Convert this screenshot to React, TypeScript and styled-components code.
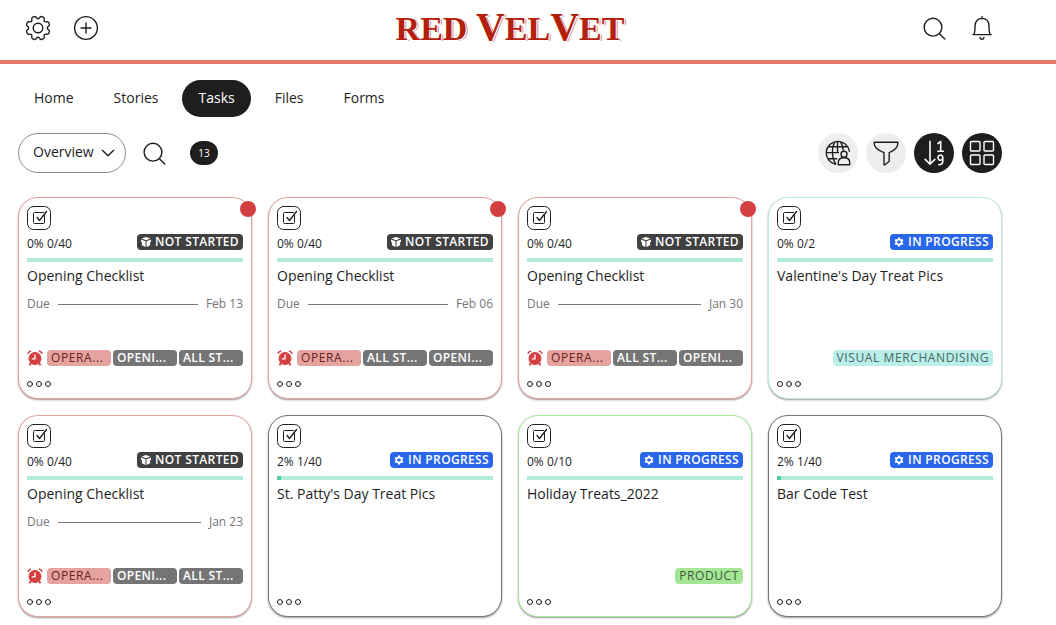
import React from "react";
import styled, { createGlobalStyle } from "styled-components";

const ink = "#1e1e1e";

const GlobalStyle = createGlobalStyle`
  *, *::before, *::after { box-sizing: border-box; }
  body {
    margin: 0;
    background: #fff;
    color: ${ink};
    font: 14px/20px "Open Sans", "Noto Sans", sans-serif;
  }
  button, select { font: inherit; color: inherit; }
  button { cursor: pointer; }
`;

const Header = styled.header`
  display: grid;
  grid-template-columns: 1fr auto 1fr;
  align-items: center;
  height: 64px;
  padding: 0 60px 0 24px;
  border-bottom: 4px solid #eb766d;
`;

const HeaderGroup = styled.div<{ $end?: boolean }>`
  display: flex;
  gap: 20px;
  padding-bottom: 4px;
  justify-content: ${(p) => (p.$end ? "flex-end" : "flex-start")};
`;

const IconButton = styled.button`
  display: flex;
  align-items: center;
  justify-content: center;
  width: 28px;
  height: 28px;
  padding: 0;
  border: 0;
  background: none;
`;

const Logo = styled.a`
  display: flex;
  align-items: baseline;
  padding-bottom: 4px;
  color: #b3200e;
  font: bold 34px/40px "Liberation Serif", serif;
  text-decoration: none;
  white-space: pre;
  text-shadow: 1px 1px 0 #fff, 2px 1px 0 #d98b80;
`;

const LogoTall = styled.span`
  font-size: 40px;
`;

const Nav = styled.nav`
  display: flex;
  gap: 8px;
  padding: 16px 18px;
`;

const NavLink = styled.a<{ $active?: boolean }>`
  padding: 8px 16px 9px;
  border-radius: 20px;
  color: ${(p) => (p.$active ? "#fff" : ink)};
  background: ${(p) => (p.$active ? ink : "transparent")};
  text-decoration: none;
`;

const Toolbar = styled.div`
  display: flex;
  align-items: center;
  justify-content: space-between;
  padding: 0 54px 24px 18px;
`;

const ToolGroup = styled.div`
  display: flex;
  align-items: center;
  gap: 8px;
`;

const Filters = styled(ToolGroup)`
  gap: 14px;
`;

const SelectWrap = styled.label`
  display: grid;
  align-items: center;
  > * { grid-area: 1 / 1; }
  > svg { justify-self: end; margin-right: 11px; pointer-events: none; }
`;

const ViewSelect = styled.select`
  appearance: none;
  width: 108px;
  height: 40px;
  padding: 0 28px 2px 14px;
  border: 1px solid #8c8c8c;
  border-radius: 20px;
  background: #fff;
`;

const Count = styled.span`
  display: flex;
  align-items: center;
  justify-content: center;
  width: 28px;
  height: 24px;
  margin-left: 8px;
  border-radius: 12px;
  background: ${ink};
  color: #fff;
  font-size: 10px;
`;

const RoundButton = styled.button<{ $dark?: boolean }>`
  display: flex;
  align-items: center;
  justify-content: center;
  width: 40px;
  height: 40px;
  padding: 0;
  border: 0;
  border-radius: 50%;
  background: ${(p) => (p.$dark ? ink : "#eee")};
  color: ${(p) => (p.$dark ? "#fff" : ink)};
`;

const Board = styled.main`
  display: grid;
  grid-template-columns: repeat(auto-fill, 234px);
  gap: 16px;
  padding: 0 18px 8px;
`;

const CardBox = styled.article<{ $edge: string }>`
  position: relative;
  display: flex;
  flex-direction: column;
  min-height: 202px;
  padding: 8px;
  border: 1px solid ${(p) => p.$edge};
  border-radius: 20px;
  background: #fff;
  box-shadow: 0 1px 2px rgba(0, 0, 0, 0.4);
`;

const AlertDot = styled.span`
  position: absolute;
  top: 3px;
  right: -5px;
  width: 16px;
  height: 16px;
  border-radius: 50%;
  background: #d43f41;
`;

const StatusRow = styled.div`
  display: flex;
  justify-content: space-between;
  align-items: center;
  height: 16px;
  margin: 4px 0 8px;
  font-size: 12px;
`;

const ProgressText = styled.span`
  padding-top: 3px;
`;

const Chip = styled.span<{ $bg: string; $fg?: string; $fixed?: boolean }>`
  display: flex;
  align-items: center;
  gap: 4px;
  height: 16px;
  width: ${(p) => (p.$fixed ? "64px" : "auto")};
  padding: 0 4px 1px;
  border-radius: 4px;
  background: ${(p) => p.$bg};
  color: ${(p) => p.$fg || "#fff"};
  font-size: 12px;
  font-weight: ${(p) => (p.$fg ? 500 : 600)};
  line-height: 14px;
  letter-spacing: ${(p) => (p.$fg ? "0.05em" : "0.03em")};
  text-transform: uppercase;
  white-space: nowrap;
`;

const Track = styled.div`
  height: 4px;
  background: #b2ebd9;
`;

const Fill = styled.div`
  height: 4px;
  background: #52cfa0;
`;

const Title = styled.h2`
  margin: 4px 0 8px;
  font-size: 14px;
  line-height: 20px;
  font-weight: 400;
`;

const DueRow = styled.div`
  display: flex;
  align-items: center;
  gap: 8px;
  color: #767676;
  font-size: 12px;
  line-height: 20px;
`;

const DueLine = styled.span`
  flex: 1;
  height: 1px;
  background: #767676;
`;

const CardFoot = styled.footer`
  margin-top: auto;
`;

const Tags = styled.div`
  display: flex;
  align-items: center;
  justify-content: flex-end;
  gap: 2px;
`;

const AlarmSlot = styled.span`
  display: flex;
  margin-right: auto;
`;

const MoreButton = styled.button`
  display: block;
  height: 8px;
  margin: 14px 0 2px;
  padding: 0;
  border: 0;
  background: none;
  > svg { display: block; }
`;

const stroke = {
  fill: "none",
  stroke: "currentColor",
  strokeWidth: 1.4,
  strokeLinecap: "round" as const,
  strokeLinejoin: "round" as const,
  "aria-hidden": true,
};

const gearPath = (() => {
  const teeth = 8;
  const pts: string[] = [];
  for (let i = 0; i < teeth; i++) {
    const a = (i * 2 * Math.PI) / teeth + Math.PI / 8;
    const at = (r: number, d: number) =>
      `${(12 + r * Math.cos(a + d)).toFixed(2)} ${(12 + r * Math.sin(a + d)).toFixed(2)}`;
    pts.push(
      `${i ? "L" : "M"}${at(11.2, -0.2)}Q${at(12.1, -0.14)} ${at(12, -0.06)}L${at(12, 0.06)}Q${at(12.1, 0.14)} ${at(11.2, 0.2)}Q${at(7.6, 0.39)} ${at(11.2, 0.585)}`
    );
  }
  return pts.join("") + "Z";
})();

const GearIcon = () => (
  <svg width="26" height="26" viewBox="-1 -1 26 26" {...stroke}>
    <path d={gearPath} />
    <circle cx="12" cy="12" r="4.8" />
  </svg>
);
const PlusIcon = () => (
  <svg width="26" height="26" viewBox="0 0 26 26" {...stroke}>
    <circle cx="13" cy="13" r="11.4" />
    <path d="M13 8v10M8 13h10" />
  </svg>
);
const SearchIcon = () => (
  <svg width="24" height="24" viewBox="0 0 24 24" {...stroke}>
    <circle cx="11" cy="11.2" r="8.9" />
    <path d="M17.4 17.8l5.400 5.200" />
  </svg>
);
const BellIcon = () => (
  <svg width="24" height="26" viewBox="0 0 24 26" {...stroke}>
    <path d="M12 1.5v2M2.800 19.600h18.400M4 19.400c1-2 1-4 1-8.100c0-5 2.800-7.900 7-7.900s7 2.900 7 7.900c0 4.100 0 6.100 1 8.100M10 22.500c.6 2.300 3.400 2.300 4 0" />
  </svg>
);
const GlobeUserIcon = () => (
  <svg width="26" height="26" viewBox="0 0 26 26" {...stroke}>
    <path d="M10.500 24.300A11.600 11.600 0 1 1 24.300 11.200M12.500 1.400v11.200M10 1.800C6.500 7 6.500 18 10.700 24M15.500 1.800c1.800 2.800 2.500 5.500 2.600 8.200M3.200 6.700h19M1.200 12.600h12.300M3.200 18.700h8.500" />
    <circle cx="19" cy="14.300" r="3" />
    <path d="M13.300 24.700v-2.200c0-3 2.300-4.700 5.700-4.700s5.700 1.700 5.700 4.700v2.200z" />
  </svg>
);
const FunnelIcon = () => (
  <svg width="26" height="26" viewBox="0 0 26 26" {...stroke}>
    <path d="M1.200 2.200h23.600v1.500c0 4.500-4 7-8.600 9v8.500l-4.200 3.500h-1v-12C6 10.500 1.200 8 1.200 3.700z" />
  </svg>
);
const SortIcon = () => (
  <svg width="26" height="26" viewBox="0 0 26 26" {...stroke} strokeWidth={1.600}>
    <path d="M9 1.300v22.700M4.200 19.400L9 24.200l4.800-4.800M17 3.500l2.700-2v9.500M16.800 11.200h5.600M21.800 17.800a2.400 2.600 0 1 1 0-.4v3.600c0 2.400-1.500 3.800-4 3.800" />
  </svg>
);
const GridIcon = () => (
  <svg width="26" height="26" viewBox="0 0 26 26" {...stroke}>
    <rect x="1.500" y="1.500" width="9.500" height="9.500" rx="1" />
    <rect x="15" y="1.500" width="9.500" height="9.500" rx="1" />
    <rect x="1.500" y="15" width="9.500" height="9.500" rx="1" />
    <rect x="15" y="15" width="9.500" height="9.500" rx="1" />
  </svg>
);
const ChevronIcon = () => (
  <svg width="14" height="8" viewBox="0 0 14 8" {...stroke}>
    <path d="M1.300 1.200L7 6.800l5.700-5.600" />
  </svg>
);
const ChecklistIcon = () => (
  <svg width="24" height="24" viewBox="0 0 24 24" {...stroke} strokeWidth={1}>
    <rect x="0.500" y="0.500" width="23" height="23" rx="6" />
    <path d="M17.500 9.500v7q0 1-1 1h-9q-1 0-1-1v-9q0-1 1-1h9" />
    <path d="M10 11.500l2.500 3L19.500 5.500" strokeWidth={1.300} />
  </svg>
);
const BoxIcon = () => (
  <svg width="10" height="10" viewBox="0 0 10 10" fill="currentColor" aria-hidden>
    <path d="M5 0l4.300 1.600L5 3.300.7 1.600zM0 2.400l4.500 1.800V10L.9 8.300V5.200L0 4.800zM10 2.400L5.500 4.200V10l3.600-1.700V5.200l.9-.4z" />
  </svg>
);
const CogIcon = () => (
  <svg width="10" height="10" viewBox="0 0 10 10" fill="none" stroke="currentColor" aria-hidden>
    <circle cx="5" cy="5" r="2.700" strokeWidth="1.800" />
    <path d="M5 0.500v1.600M5 7.900v1.600M1.100 2.750l1.400.8M7.500 6.450l1.400.8M1.100 7.250l1.400-.8M7.500 3.550l1.400-.8" strokeWidth="2" />
  </svg>
);
const AlarmIcon = () => (
  <svg width="16" height="16" viewBox="0 0 16 16" fill="none" stroke="#d43f41" aria-label="Overdue">
    <circle cx="8" cy="8.500" r="6" fill="#d43f41" />
    <path d="M.8 3.800Q1.500 1.500 4 .9M15.200 3.800Q14.500 1.500 12 .9" strokeWidth="1.500" />
    <path d="M4 13l-1.500 2.300M12 13l1.500 2.300" strokeWidth="2" />
    <path d="M8 4.500v4.300H4.800" stroke="#fff" strokeWidth="1.300" />
  </svg>
);
const DotsIcon = () => (
  <svg width="25" height="8" viewBox="0 0 25 8" {...stroke} strokeWidth={1}>
    <circle cx="3" cy="4" r="2.500" />
    <circle cx="12" cy="4" r="2.500" />
    <circle cx="21" cy="4" r="2.500" />
  </svg>
);

const red = "#e5a3a0";
const teal = "#b9efe8";
const green = "#a5e696";
const gray = "#757575";

type Tag = { label: string; bg: string; fg?: string };
type Task = {
  title: string;
  percent: number;
  done: string;
  started?: boolean;
  edge: string;
  due?: string;
  alert?: boolean;
  tags: Tag[];
};

const operations: Tag = { label: "Opera...", bg: red, fg: "#6b2220" };
const opening: Tag = { label: "Openi...", bg: gray };
const allStaff: Tag = { label: "All St...", bg: gray };

const tasks: Task[] = [
  { title: "Opening Checklist", percent: 0, done: "0/40", edge: red, due: "Feb 13", alert: true, tags: [operations, opening, allStaff] },
  { title: "Opening Checklist", percent: 0, done: "0/40", edge: red, due: "Feb 06", alert: true, tags: [operations, allStaff, opening] },
  { title: "Opening Checklist", percent: 0, done: "0/40", edge: red, due: "Jan 30", alert: true, tags: [operations, allStaff, opening] },
  { title: "Valentine's Day Treat Pics", percent: 0, done: "0/2", started: true, edge: teal, tags: [{ label: "Visual Merchandising", bg: teal, fg: "#4d6562" }] },
  { title: "Opening Checklist", percent: 0, done: "0/40", edge: red, due: "Jan 23", tags: [operations, opening, allStaff] },
  { title: "St. Patty's Day Treat Pics", percent: 2, done: "1/40", started: true, edge: gray, tags: [] },
  { title: "Holiday Treats_2022", percent: 0, done: "0/10", started: true, edge: green, tags: [{ label: "Product", bg: green, fg: "#3f5c38" }] },
  { title: "Bar Code Test", percent: 2, done: "1/40", started: true, edge: gray, tags: [] },
];

const TaskCard = ({ task }: { task: Task }) => (
  <CardBox $edge={task.edge}>
    {task.alert && <AlertDot />}
    <ChecklistIcon />
    <StatusRow>
      <ProgressText>{`${task.percent}% ${task.done}`}</ProgressText>
      {task.started ? (
        <Chip $bg="#2a66ea"><CogIcon />In progress</Chip>
      ) : (
        <Chip $bg="#414141"><BoxIcon />Not started</Chip>
      )}
    </StatusRow>
    <Track role="progressbar" aria-label={task.title} aria-valuenow={task.percent}>
      <Fill style={{ width: `${task.percent}%` }} />
    </Track>
    <Title>{task.title}</Title>
    {task.due && (
      <DueRow>
        <span>Due</span>
        <DueLine />
        <span>{task.due}</span>
      </DueRow>
    )}
    <CardFoot>
      <Tags>
        {task.due && <AlarmSlot><AlarmIcon /></AlarmSlot>}
        {task.tags.map((t) => (
          <Chip key={t.label} $bg={t.bg} $fg={t.fg} $fixed={task.tags.length > 1}>{t.label}</Chip>
        ))}
      </Tags>
      <MoreButton aria-label="More actions"><DotsIcon /></MoreButton>
    </CardFoot>
  </CardBox>
);

const App = () => (
  <>
    <GlobalStyle />
    <Header>
      <HeaderGroup>
        <IconButton aria-label="Settings"><GearIcon /></IconButton>
        <IconButton aria-label="Add"><PlusIcon /></IconButton>
      </HeaderGroup>
      <Logo href="#">
        RED <LogoTall>V</LogoTall>EL<LogoTall>V</LogoTall>ET
      </Logo>
      <HeaderGroup $end>
        <IconButton aria-label="Search"><SearchIcon /></IconButton>
        <IconButton aria-label="Notifications"><BellIcon /></IconButton>
      </HeaderGroup>
    </Header>
    <Nav>
      {["Home", "Stories", "Tasks", "Files", "Forms"].map((n) => (
        <NavLink key={n} href="#" $active={n === "Tasks"}>{n}</NavLink>
      ))}
    </Nav>
    <Toolbar>
      <Filters>
        <SelectWrap>
          <ViewSelect aria-label="View">
            <option>Overview</option>
          </ViewSelect>
          <ChevronIcon />
        </SelectWrap>
        <IconButton aria-label="Search tasks"><SearchIcon /></IconButton>
        <Count>13</Count>
      </Filters>
      <ToolGroup>
        <RoundButton aria-label="Audience"><GlobeUserIcon /></RoundButton>
        <RoundButton aria-label="Filter"><FunnelIcon /></RoundButton>
        <RoundButton $dark aria-label="Sort"><SortIcon /></RoundButton>
        <RoundButton $dark aria-label="Grid view"><GridIcon /></RoundButton>
      </ToolGroup>
    </Toolbar>
    <Board>
      {tasks.map((t, i) => <TaskCard key={i} task={t} />)}
    </Board>
  </>
);

export default App;
